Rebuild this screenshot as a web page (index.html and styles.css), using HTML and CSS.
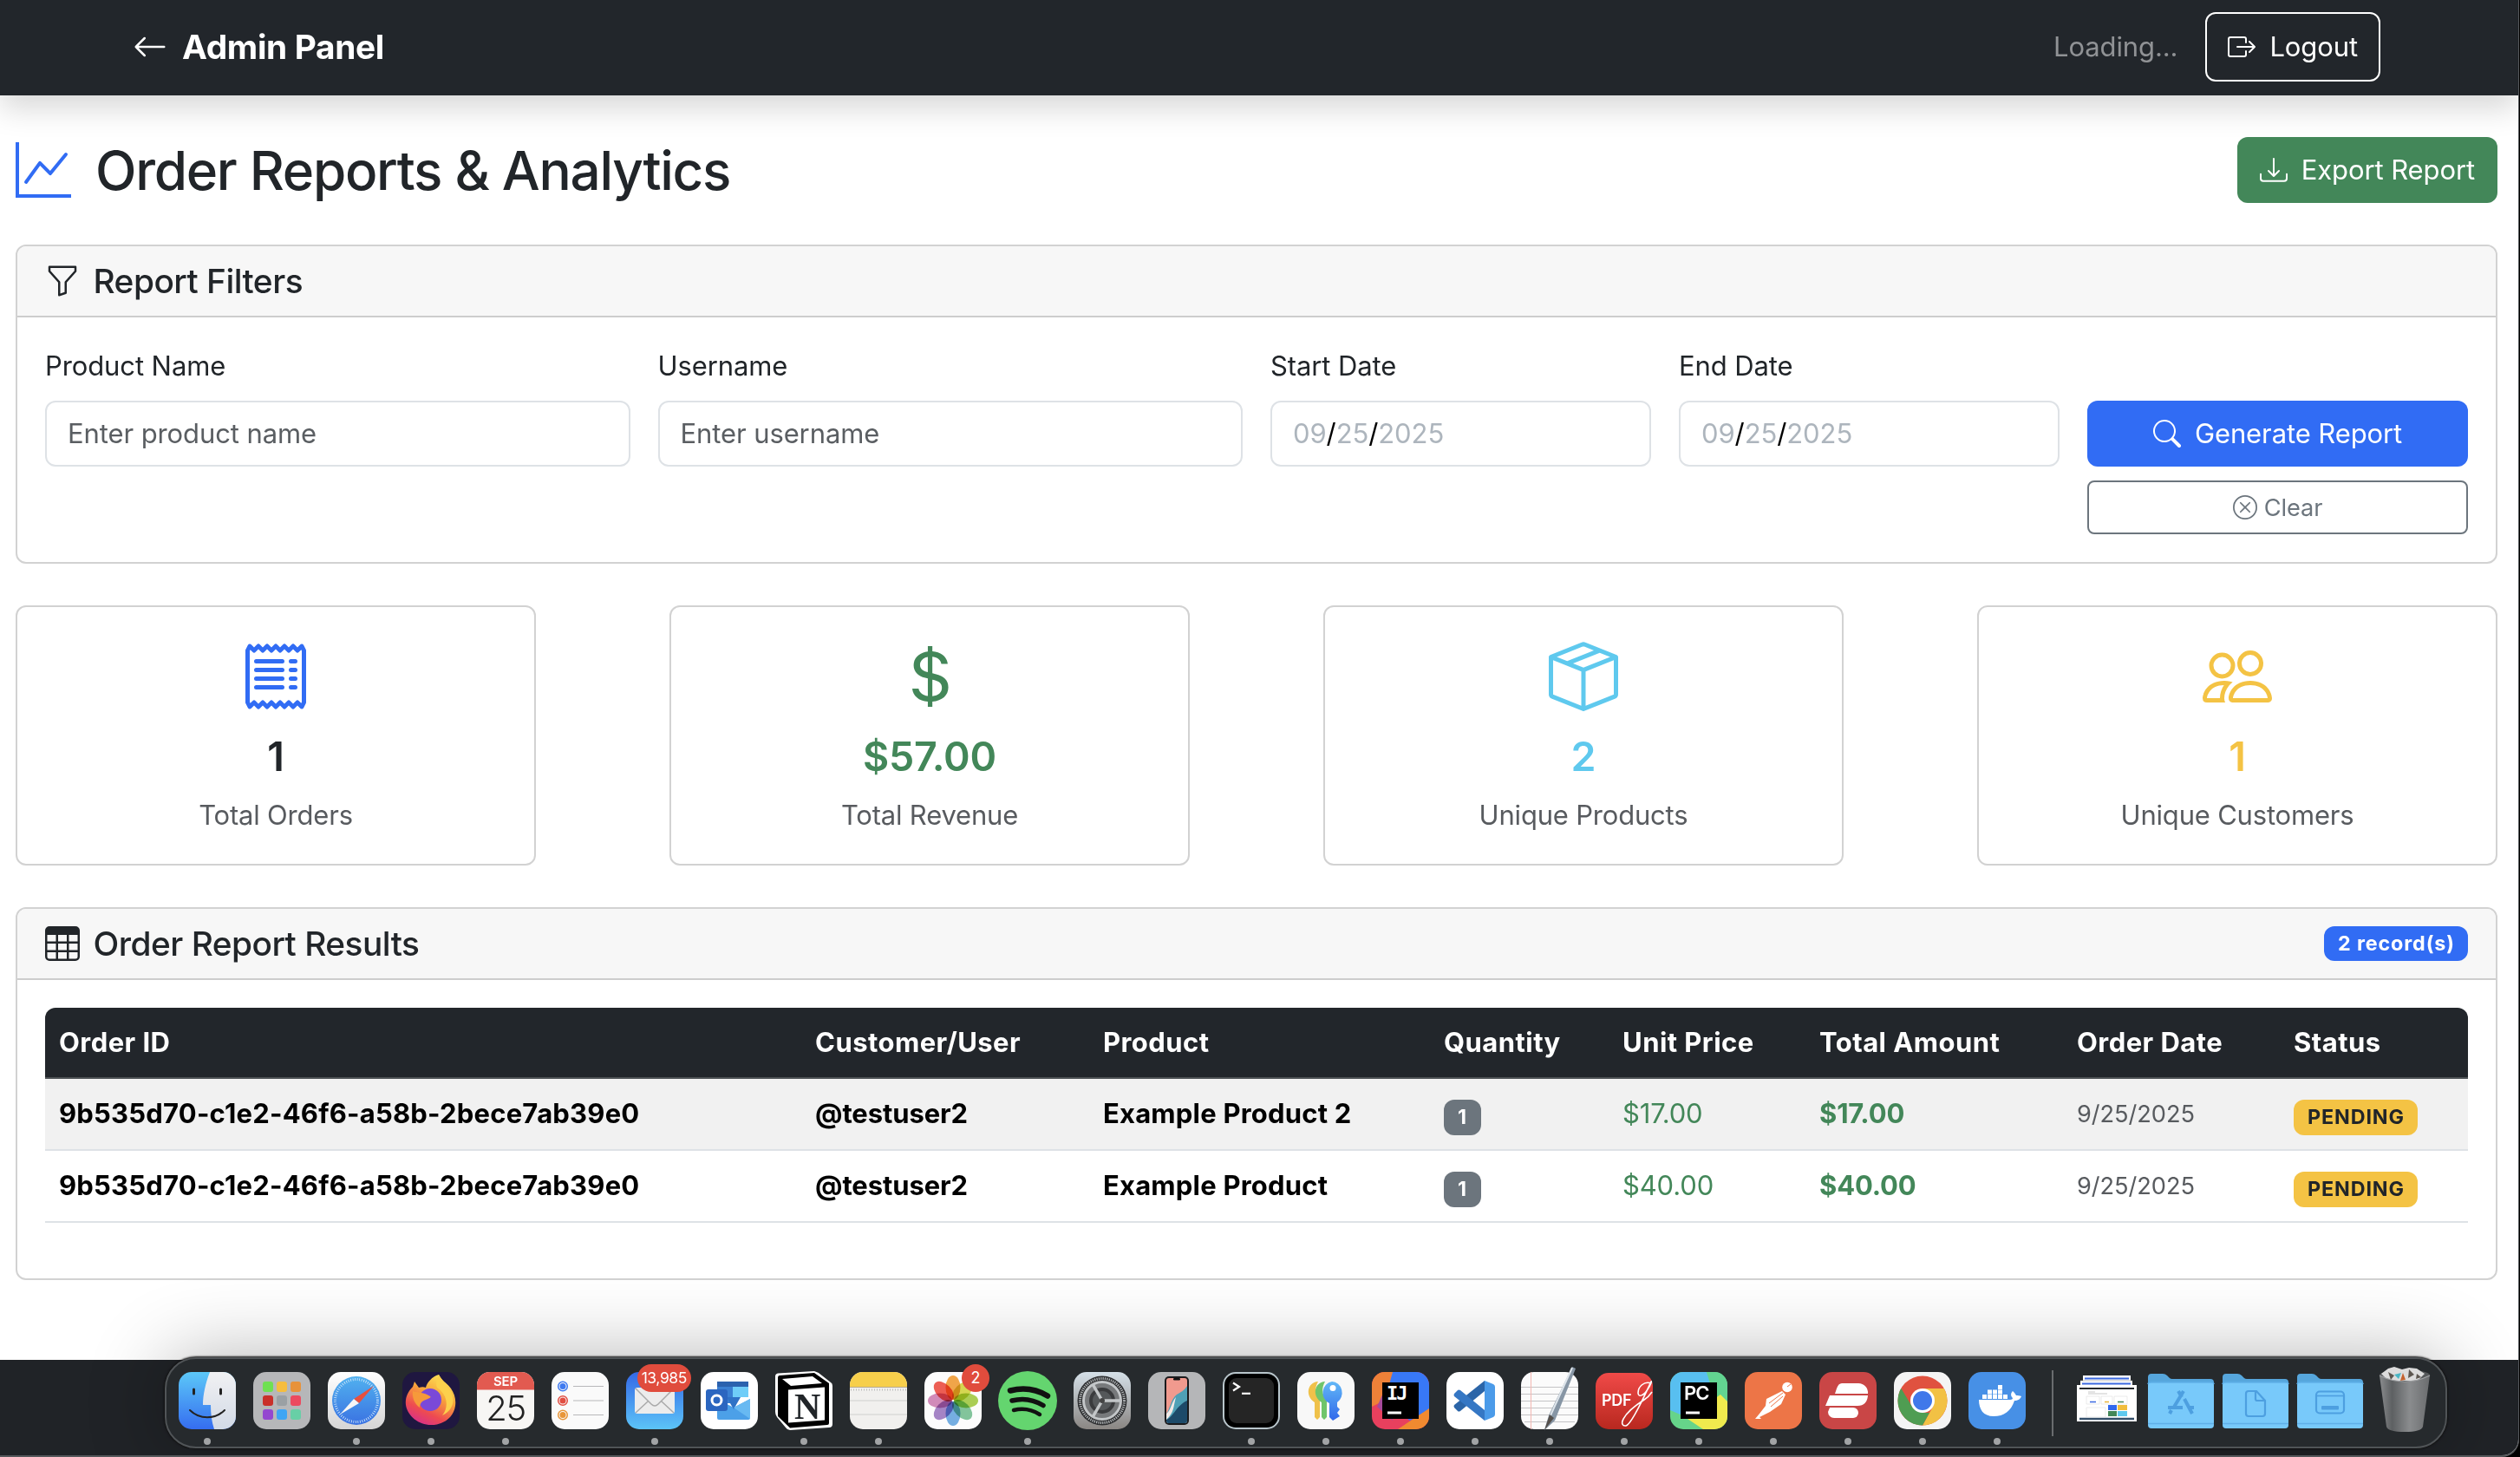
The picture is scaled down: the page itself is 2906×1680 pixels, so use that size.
FILE: index.html
```html
<!DOCTYPE html>
<html lang="en">
<head>
<meta charset="utf-8">
<title>Order Reports &amp; Analytics</title>
<link rel="stylesheet" href="styles.css">
</head>
<body>
<div class="window">
  <nav class="navbar">
    <a class="brand">
      <svg class="i40" viewBox="0 0 16 16"><path d="M15 8a.5.5 0 0 0-.5-.5H2.707l3.147-3.146a.5.5 0 1 0-.708-.708l-4 4a.5.5 0 0 0 0 .708l4 4a.5.5 0 0 0 .708-.708L2.707 8.5H14.5A.5.5 0 0 0 15 8"/></svg>
      <span>Admin Panel</span>
    </a>
    <div class="nav-right">
      <span class="loading">Loading...</span>
      <button class="btn logout">
        <svg class="i32" viewBox="0 0 16 16"><path d="M10 12.5a.5.5 0 0 1-.5.5h-8a.5.5 0 0 1-.5-.5v-9a.5.5 0 0 1 .5-.5h8a.5.5 0 0 1 .5.5v2a.5.5 0 0 0 1 0v-2A1.5 1.5 0 0 0 9.500 2h-8A1.500 1.500 0 0 0 0 3.500v9A1.500 1.500 0 0 0 1.500 14h8a1.500 1.500 0 0 0 1.500-1.500v-2a.5.5 0 0 0-1 0z"/><path d="M15.854 8.354a.5.5 0 0 0 0-.708l-3-3a.5.5 0 0 0-.708.708L14.293 7.500H5.500a.5.5 0 0 0 0 1h8.793l-2.147 2.146a.5.5 0 0 0 .708.708z"/></svg>
        <span>Logout</span>
      </button>
    </div>
  </nav>

  <main class="page">
    <div class="title-row">
      <h1>
        <svg class="i64 primary" viewBox="0 0 16 16"><path d="M0 0h1v15h15v1H0zm14.817 3.113a.5.5 0 0 1 .07.704l-4.5 5.500a.5.5 0 0 1-.74.037L7.060 6.767l-3.656 5.027a.5.5 0 0 1-.808-.588l4-5.500a.5.5 0 0 1 .758-.060l2.609 2.610 4.150-5.073a.5.5 0 0 1 .704-.070"/></svg>
        <span>Order Reports &amp; Analytics</span>
      </h1>
      <button class="btn export">
        <svg class="i32" viewBox="0 0 16 16"><path d="M.5 9.900a.5.5 0 0 1 .5.5v2.500a1 1 0 0 0 1 1h12a1 1 0 0 0 1-1v-2.500a.5.5 0 0 1 1 0v2.500a2 2 0 0 1-2 2H2a2 2 0 0 1-2-2v-2.500a.5.5 0 0 1 .5-.5"/><path d="M7.646 11.854a.5.5 0 0 0 .708 0l3-3a.5.5 0 0 0-.708-.708L8.500 10.293V1.500a.5.5 0 0 0-1 0v8.793L5.354 8.146a.5.5 0 1 0-.708.708z"/></svg>
        <span>Export Report</span>
      </button>
    </div>

    <section class="card">
      <header class="card-header">
        <svg class="i40" viewBox="0 0 16 16"><path d="M1.500 1.500A.5.5 0 0 1 2 1h12a.5.5 0 0 1 .5.5v2a.5.5 0 0 1-.128.334L10 8.692V13.500a.5.5 0 0 1-.342.474l-3 1A.5.5 0 0 1 6 14.500V8.692L1.628 3.834A.5.5 0 0 1 1.500 3.500zm1 .5v1.308l4.372 4.858A.5.5 0 0 1 7 8.500v5.306l2-.666V8.500a.5.5 0 0 1 .128-.334L13.500 3.308V2z"/></svg>
        <h5>Report Filters</h5>
      </header>
      <form class="filters">
        <div class="field w3"><label>Product Name</label><div class="input">Enter product name</div></div>
        <div class="field w3"><label>Username</label><div class="input">Enter username</div></div>
        <div class="field w2"><label>Start Date</label><div class="input date">09<i>/</i>25<i>/</i>2025</div></div>
        <div class="field w2"><label>End Date</label><div class="input date">09<i>/</i>25<i>/</i>2025</div></div>
        <div class="field w2 actions">
          <button type="button" class="btn generate">
            <svg class="i32" viewBox="0 0 16 16"><path d="M11.742 10.344a6.500 6.500 0 1 0-1.397 1.398h-.001q.044.060.098.115l3.850 3.850a1 1 0 0 0 1.415-1.414l-3.850-3.850a1 1 0 0 0-.115-.100zM12 6.500a5.500 5.500 0 1 1-11 0 5.500 5.500 0 0 1 11 0"/></svg>
            <span>Generate Report</span>
          </button>
          <button type="button" class="btn clear">
            <svg class="i28" viewBox="0 0 16 16"><path d="M8 15A7 7 0 1 1 8 1a7 7 0 0 1 0 14m0 1A8 8 0 1 0 8 0a8 8 0 0 0 0 16"/><path d="M4.646 4.646a.5.5 0 0 1 .708 0L8 7.293l2.646-2.647a.5.5 0 0 1 .708.708L8.707 8l2.647 2.646a.5.5 0 0 1-.708.708L8 8.707l-2.646 2.647a.5.5 0 0 1-.708-.708L7.293 8 4.646 5.354a.5.5 0 0 1 0-.708"/></svg>
            <span>Clear</span>
          </button>
        </div>
      </form>
    </section>

    <section class="stats">
      <div class="stat">
        <svg class="i80 primary" viewBox="0 0 16 16"><path d="M1.920.506a.5.5 0 0 1 .434.140L3 1.293l.646-.647a.5.5 0 0 1 .708 0L5 1.293l.646-.647a.5.5 0 0 1 .708 0L7 1.293l.646-.647a.5.5 0 0 1 .708 0L9 1.293l.646-.647a.5.5 0 0 1 .708 0l.646.647.646-.647a.5.5 0 0 1 .708 0l.646.647.646-.647a.5.5 0 0 1 .801.130l.5 1A.5.5 0 0 1 15 2v12a.5.5 0 0 1-.053.224l-.5 1a.5.5 0 0 1-.8.130L13 14.707l-.646.647a.5.5 0 0 1-.708 0L11 14.707l-.646.647a.5.5 0 0 1-.708 0L9 14.707l-.646.647a.5.5 0 0 1-.708 0L7 14.707l-.646.647a.5.5 0 0 1-.708 0L5 14.707l-.646.647a.5.5 0 0 1-.708 0L3 14.707l-.646.647a.5.5 0 0 1-.801-.130l-.5-1A.5.5 0 0 1 1 14V2a.5.5 0 0 1 .053-.224l.5-1a.5.5 0 0 1 .367-.270m.217 1.338L2 2.118v11.764l.137.274.510-.510a.5.5 0 0 1 .707 0l.646.647.646-.646a.5.5 0 0 1 .708 0l.646.646.646-.646a.5.5 0 0 1 .708 0l.646.646.646-.646a.5.5 0 0 1 .708 0l.646.646.646-.646a.5.5 0 0 1 .708 0l.646.646.646-.646a.5.5 0 0 1 .708 0l.509.509.137-.274V2.118l-.137-.274-.510.510a.5.5 0 0 1-.707 0L12 1.707l-.646.647a.5.5 0 0 1-.708 0L10 1.707l-.646.647a.5.5 0 0 1-.708 0L8 1.707l-.646.647a.5.5 0 0 1-.708 0L6 1.707l-.646.647a.5.5 0 0 1-.708 0L4 1.707l-.646.647a.5.5 0 0 1-.708 0z"/><path d="M3.500 4.500h6m-6 2h6m-6 2h6m-6 2h6m2-6h1m-1 2h1m-1 2h1m-1 2h1" fill="none" stroke="currentColor" stroke-linecap="round"/></svg>
        <strong>1</strong><span>Total Orders</span>
      </div>
      <div class="stat">
        <svg class="i80 success" viewBox="0 0 16 16"><path d="M4 10.781c.148 1.667 1.513 2.850 3.591 3.003V15h1.043v-1.216c2.270-.179 3.678-1.438 3.678-3.300 0-1.590-.947-2.510-2.956-3.028l-.722-.187V3.467c1.122.110 1.879.714 2.070 1.616h1.470c-.166-1.600-1.540-2.748-3.540-2.875V1H7.591v1.233c-1.939.230-3.270 1.472-3.270 3.156 0 1.454.966 2.483 2.661 2.917l.610.162v4.031c-1.149-.170-1.940-.800-2.131-1.718zm3.391-3.836c-1.043-.263-1.600-.825-1.600-1.616 0-.944.704-1.641 1.800-1.828v3.495l-.200-.050zm1.591 1.872c1.287.323 1.852.859 1.852 1.769 0 1.097-.826 1.828-2.200 1.939V8.730z"/></svg>
        <strong class="success">$57.00</strong><span>Total Revenue</span>
      </div>
      <div class="stat">
        <svg class="i80 info" viewBox="0 0 16 16"><path d="M8.186 1.113a.5.5 0 0 0-.372 0L1.846 3.500l2.404.961L10.404 2zm3.564 1.426L5.596 5 8 5.961 14.154 3.500zm3.250 1.700-6.500 2.600v7.922l6.500-2.600V4.240zM7.500 14.762V6.838L1 4.239v7.923zM7.443.184a1.500 1.500 0 0 1 1.114 0l7.129 2.852A.5.5 0 0 1 16 3.500v8.662a1 1 0 0 1-.629.928l-7.185 2.874a.5.5 0 0 1-.372 0L.630 13.090a1 1 0 0 1-.630-.928V3.500a.5.5 0 0 1 .314-.464z"/></svg>
        <strong class="info">2</strong><span>Unique Products</span>
      </div>
      <div class="stat">
        <svg class="i80 warning" viewBox="0 0 16 16"><path d="M15 14s1 0 1-1-1-4-5-4-5 3-5 4 1 1 1 1zm-7.978-1L7 12.996c.001-.264.167-1.030.760-1.720C8.312 10.629 9.282 10 11 10c1.717 0 2.687.630 3.240 1.276.593.690.758 1.457.760 1.720l-.008.002-.014.002zM11 7a2 2 0 1 0 0-4 2 2 0 0 0 0 4m3-2a3 3 0 1 1-6 0 3 3 0 0 1 6 0M6.936 9.280a6 6 0 0 0-1.230-.247A7 7 0 0 0 5 9c-4 0-5 3-5 4q0 1 1 1h4.216A2.240 2.240 0 0 1 5 13c0-1.010.377-2.042 1.090-2.904.243-.294.526-.569.846-.816M4.920 10A5.500 5.500 0 0 0 4 13H1c0-.260.164-1.030.760-1.724.545-.636 1.492-1.256 3.160-1.275zM1.500 5.500a3 3 0 1 1 6 0 3 3 0 0 1-6 0m3-2a2 2 0 1 0 0 4 2 2 0 0 0 0-4"/></svg>
        <strong class="warning">1</strong><span>Unique Customers</span>
      </div>
    </section>

    <section class="card">
      <header class="card-header">
        <svg class="i40" viewBox="0 0 16 16"><path d="M0 2a2 2 0 0 1 2-2h12a2 2 0 0 1 2 2v12a2 2 0 0 1-2 2H2a2 2 0 0 1-2-2zm15 2h-4v3h4zm0 4h-4v3h4zm0 4h-4v3h3a1 1 0 0 0 1-1zm-5 3v-3H6v3zm-5 0v-3H1v2a1 1 0 0 0 1 1zm-4-4h4V8H1zm0-4h4V4H1zm5-3v3h4V4zm4 4H6v3h4z"/></svg>
        <h5>Order Report Results</h5>
        <span class="badge blue">2 record(s)</span>
      </header>
      <div class="table-wrap">
        <table>
          <colgroup><col class="c1"><col class="c2"><col class="c3"><col class="c4"><col class="c5"><col class="c6"><col class="c7"><col></colgroup>
          <thead><tr><th>Order ID</th><th>Customer/User</th><th>Product</th><th>Quantity</th><th>Unit Price</th><th>Total Amount</th><th>Order Date</th><th>Status</th></tr></thead>
          <tbody>
            <tr><td>9b535d70-c1e2-46f6-a58b-2bece7ab39e0</td><td class="user">@testuser2</td><td>Example Product 2</td><td><span class="badge gray">1</span></td><td class="price">$17.00</td><td class="price total">$17.00</td><td class="day">9/25/2025</td><td><span class="badge yellow">PENDING</span></td></tr>
            <tr><td>9b535d70-c1e2-46f6-a58b-2bece7ab39e0</td><td class="user">@testuser2</td><td>Example Product</td><td><span class="badge gray">1</span></td><td class="price">$40.00</td><td class="price total">$40.00</td><td class="day">9/25/2025</td><td><span class="badge yellow">PENDING</span></td></tr>
          </tbody>
        </table>
      </div>
    </section>
  </main>
  <footer class="footer"></footer>

  <div class="dock">
    <!-- Finder -->
    <div class="app run"><svg viewBox="0 0 66 66"><defs><linearGradient id="fb" x2="0" y2="1"><stop stop-color="#5cc8f8"/><stop offset="1" stop-color="#356df0"/></linearGradient><linearGradient id="fw" x2="0" y2="1"><stop stop-color="#f1f1f3"/><stop offset="1" stop-color="#d2dae6"/></linearGradient><clipPath id="r"><rect width="66" height="66" rx="15"/></clipPath></defs><g clip-path="url(#r)"><path d="M0 0h66v66H0z" fill="url(#fb)"/><path d="M36 0C31 13 28 26 28 38h9c0 10 1 19 4 28h25V0z" fill="url(#fw)"/></g><path d="M17.500 20v5M48.500 20v5" stroke="#222" stroke-width="3" stroke-linecap="round"/><path d="M13 44c11 11 29 11 40 0" fill="none" stroke="#222" stroke-width="2" stroke-linecap="round"/></svg></div>
    <!-- Launchpad -->
    <div class="app"><svg viewBox="0 0 66 66"><rect width="66" height="66" rx="15" fill="#b6b7b9"/><g><rect x="11" y="11" width="12" height="12" rx="3" fill="#6fe052"/><rect x="27" y="11" width="12" height="12" rx="3" fill="#f5bd3f"/><rect x="43" y="11" width="12" height="12" rx="3" fill="#e8923a"/><rect x="11" y="27" width="12" height="12" rx="3" fill="#c9302a"/><rect x="27" y="27" width="12" height="12" rx="3" fill="#9aa0a4"/><rect x="43" y="27" width="12" height="12" rx="3" fill="#ec4a5f"/><rect x="11" y="43" width="12" height="12" rx="3" fill="#9447d0"/><rect x="27" y="43" width="12" height="12" rx="3" fill="#3fa5f4"/><rect x="43" y="43" width="12" height="12" rx="3" fill="#68cfa6"/></g></svg></div>
    <!-- Safari -->
    <div class="app run"><svg viewBox="0 0 66 66"><defs><linearGradient id="sw" x2="0" y2="1"><stop stop-color="#fff"/><stop offset="1" stop-color="#d5d5d5"/></linearGradient><linearGradient id="sb" x2="0" y2="1"><stop stop-color="#51b1ef"/><stop offset="1" stop-color="#3a72e2"/></linearGradient></defs><rect width="66" height="66" rx="15" fill="url(#sw)"/><circle cx="33" cy="33" r="28" fill="url(#sb)"/><circle cx="33" cy="33" r="24.500" fill="none" stroke="#d7ebfb" stroke-width="3" stroke-dasharray=".8 1.766"/><path d="M53 16L30 31l6 5z" fill="#e8503f"/><path d="M14 49l16-18 6 5z" fill="#f6f6f6"/></svg></div>
    <!-- Firefox -->
    <div class="app run"><svg viewBox="0 0 66 66"><defs><linearGradient id="ff" x1=".8" y1="0" x2=".3" y2="1"><stop stop-color="#fde95a"/><stop offset=".4" stop-color="#f8a63b"/><stop offset=".75" stop-color="#ee4b50"/><stop offset="1" stop-color="#d8308a"/></linearGradient></defs><rect width="66" height="66" rx="15" fill="#1f1740"/><path d="M42 3c3 7 9 9 14 16 4 6 6 12 5 20-2 14-14 22-28 22S6 51 4 38c-1-8 2-15 8-21l2-6 5 7c3-1 6-1 8 0 1-5 7-13 15-15z" fill="url(#ff)"/><circle cx="32" cy="32" r="13" fill="#7a49d8"/><path d="M12 22c6 2 13 1 20 6 2 1-2 3-5 4-4 1-7 4-7 9-6-4-9-12-8-19z" fill="#f69a3a"/><path d="M40 18c12 8 14 22 6 32 14-6 17-22 5-33l-9-14c-2 6-4 10-2 15z" fill="#fcd04c"/></svg></div>
    <!-- Calendar -->
    <div class="app run"><svg viewBox="0 0 66 66"><g clip-path="url(#r)"><path d="M0 0h66v66H0z" fill="#f7f6f4"/><path d="M0 0h66v20.500H0z" fill="#e25a50"/></g><text x="33" y="16" class="cal-m">SEP</text><text x="33" y="56" class="cal-d">25</text></svg></div>
    <!-- Reminders -->
    <div class="app"><svg viewBox="0 0 66 66"><rect width="66" height="66" rx="15" fill="#fafafa"/><path d="M25 16.500h35M25 33h35M25 49.500h35" stroke="#b8b8ba" stroke-width="1.200"/><g stroke-width="1.500" fill="none"><g stroke="#3f7af0"><circle cx="13" cy="16.500" r="5.300"/><circle cx="13" cy="16.500" r="2.800" fill="#3f7af0"/></g><g stroke="#e14e42"><circle cx="13" cy="33" r="5.300"/><circle cx="13" cy="33" r="2.800" fill="#e14e42"/></g><g stroke="#e8963a"><circle cx="13" cy="49.500" r="5.300"/><circle cx="13" cy="49.500" r="2.800" fill="#e8963a"/></g></g></svg></div>
    <!-- Mail -->
    <div class="app run"><svg viewBox="0 0 66 66"><defs><linearGradient id="ml" x2="0" y2="1"><stop stop-color="#3468e6"/><stop offset="1" stop-color="#5cc4f8"/></linearGradient></defs><rect width="66" height="66" rx="15" fill="url(#ml)"/><rect x="10" y="18" width="46" height="30" rx="3" fill="#ececec"/><path d="M11 19l18 18q4 4 8 0l18-18M11 47l14-13M55 47L41 34" fill="none" stroke="#a9a9a9" stroke-width="1.500"/></svg><span class="count wide">13,985</span></div>
    <!-- Outlook -->
    <div class="app"><svg viewBox="0 0 66 66"><rect width="66" height="66" rx="15" fill="#fff"/><path d="M19 11h36v8H19z" fill="#2b62ae"/><path d="M19 17h18v19H19z" fill="#3a7fd2"/><path d="M37 17h18v12H37z" fill="#6fcdf8"/><path d="M19 31l19 10 19-10v22a2 2 0 0 1-2 2H21a2 2 0 0 1-2-2z" fill="#4ca0e8"/><path d="M30 29h16L38 43z" fill="#2f72c6"/><path d="M38 41l19 13V31z" fill="#68b9f2"/><rect x="6" y="20" width="25" height="25" rx="3" fill="#2b66c0"/><circle cx="18.500" cy="32.500" r="5.500" fill="none" stroke="#fff" stroke-width="3"/></svg></div>
    <!-- Notion -->
    <div class="app run"><svg viewBox="0 0 66 66"><path d="M3 1.500L45-1l5 2 14 11q2 1 2 4v44q0 4-4 4L17 67q-3 0-5-3L2 52q-2-3-2-6V5q0-3 3-3.500z" fill="#fff"/><path d="M5 4l40-3 17 12v46q0 2-2 2l-43 3.500L3 51V7q0-3 2-3z" fill="#000"/><path d="M8 8l35-3 11 8-36 3z" fill="#fff"/><path d="M15 20.500l42-3v38l-42 3z" fill="#fff"/><text x="37" y="54" class="notion">N</text></svg></div>
    <!-- Notes -->
    <div class="app run"><svg viewBox="0 0 66 66"><g clip-path="url(#r)"><path d="M0 0h66v66H0z" fill="#f1f0ee"/><path d="M0 0h66v17H0z" fill="#f7cf4b"/></g><path d="M0 17.500h66" stroke="#b7a98a"/><path d="M1 20.500h64" stroke="#bbb" stroke-width="2" stroke-dasharray="1 2"/><path d="M0 33h66M0 49h66" stroke="#cfcfcd" stroke-width="1.200"/></svg></div>
    <!-- Photos -->
    <div class="app"><svg viewBox="0 0 66 66"><rect width="66" height="66" rx="15" fill="#fcfcfc"/><g class="petals"><ellipse cx="33" cy="18" rx="8.500" ry="14" fill="#f2a03a"/><ellipse cx="33" cy="18" rx="8.500" ry="14" fill="#d5d643" transform="rotate(45 33 33)"/><ellipse cx="33" cy="18" rx="8.500" ry="14" fill="#a5cc46" transform="rotate(90 33 33)"/><ellipse cx="33" cy="18" rx="8.500" ry="14" fill="#79c295" transform="rotate(135 33 33)"/><ellipse cx="33" cy="18" rx="8.500" ry="14" fill="#6aa9e2" transform="rotate(180 33 33)"/><ellipse cx="33" cy="18" rx="8.500" ry="14" fill="#a07cc4" transform="rotate(225 33 33)"/><ellipse cx="33" cy="18" rx="8.500" ry="14" fill="#d183b5" transform="rotate(270 33 33)"/><ellipse cx="33" cy="18" rx="8.500" ry="14" fill="#ee5146" transform="rotate(315 33 33)"/></g></svg><span class="count">2</span></div>
    <!-- Spotify -->
    <div class="app run"><svg viewBox="0 0 66 66"><circle cx="33" cy="33" r="34" fill="#64d56f"/><g fill="none" stroke="#111" stroke-linecap="round"><path d="M13 21.500q23-6 43 6" stroke-width="6.500"/><path d="M15 33q19-5 36 5.500" stroke-width="5.500"/><path d="M17 44q16-4 30 5" stroke-width="4.500"/></g></svg></div>
    <!-- System Settings -->
    <div class="app"><svg viewBox="0 0 66 66"><defs><linearGradient id="ss" x2="0" y2="1"><stop stop-color="#d5e0e8"/><stop offset="1" stop-color="#8a8683"/></linearGradient></defs><rect width="66" height="66" rx="15" fill="url(#ss)"/><circle cx="33" cy="33" r="28.500" fill="#2e2f31"/><circle cx="33" cy="33" r="25.500" fill="none" stroke="#b4b8ba" stroke-width="3" stroke-dasharray="1.200 1.200"/><circle cx="33" cy="33" r="21.500" fill="#77797b" stroke="#c3c6c8" stroke-width="3"/><circle cx="33" cy="33" r="13" fill="#55585a" stroke="#3a3b3d" stroke-width="4"/><path d="M33 33h21M33 33L22.500 14.800M33 33L22.500 51.200" stroke="#c3c6c8" stroke-width="3.500"/><circle cx="33" cy="33" r="3" fill="#444"/></svg></div>
    <!-- iPhone Mirroring -->
    <div class="app"><svg viewBox="0 0 66 66"><rect width="66" height="66" rx="15" fill="#b5b6b8"/><rect x="19" y="5" width="28" height="56" rx="5" fill="#1b1b1d"/><rect x="21" y="7" width="24" height="52" rx="3" fill="#f19a8e"/><path d="M21 48c4-4 5-17 12-22 5-3 8-4 12-10v40a3 3 0 0 1-3 3H24a3 3 0 0 1-3-3z" fill="#4fa0b6"/><path d="M21 55c8-3 12-17 24-22v23a3 3 0 0 1-3 3H24a3 3 0 0 1-3-3z" fill="#1d4a69"/><path d="M21 48c5-3 6-14 11-19-3 11-2 18-11 26z" fill="#f3e9e6"/><rect x="29" y="7" width="8" height="2.500" rx="1.200" fill="#111"/></svg></div>
    <!-- Terminal -->
    <div class="app run"><svg viewBox="0 0 66 66"><rect width="66" height="66" rx="15" fill="#b9c6cc"/><rect x="2" y="2" width="62" height="62" rx="13" fill="#000"/><rect x="7" y="7" width="52" height="52" rx="9" fill="#252525"/><path d="M12 12.500l7 4.500-7 4.500" fill="none" stroke="#fff" stroke-width="2.200"/><path d="M22 24.800h10" stroke="#fff" stroke-width="2.200"/></svg></div>
    <!-- Passwords -->
    <div class="app run"><svg viewBox="0 0 66 66"><defs><linearGradient id="pk" x2="0" y2="1"><stop stop-color="#62b8f7"/><stop offset="1" stop-color="#3168ea"/></linearGradient></defs><rect width="66" height="66" rx="15" fill="#f8f8f8"/><path d="M24 11C11 12 9 28 20 35v17l3 3 3-3V33c-6-7-6-15-2-22z" fill="#efc14a"/><path d="M32 11C19 12 17 28 28 35v17l3 3 3-3V33c-6-7-6-15-2-22z" fill="#6fc56b"/><path d="M40 11a12 13 0 0 1 6 24v5l3 3-3 4 3 4-8 5-4-4V36a12 13 0 0 1 3-25z" fill="url(#pk)"/><circle cx="41" cy="18.500" r="3.500" fill="#fff"/></svg></div>
    <!-- IntelliJ IDEA -->
    <div class="app run"><svg viewBox="0 0 66 66"><g clip-path="url(#r)"><path d="M0 0h66v66H0z" fill="#e8405e"/><path d="M0 0h26L16 32 0 40z" fill="#ee8138"/><path d="M24 0h42v44L44 56 14 36z" fill="#3878f6"/><path d="M14 22h10v34L6 40z" fill="#a64a9c"/><path d="M66 42v24H30z" fill="#f08a30"/></g><rect x="12" y="12" width="42" height="42" fill="#000"/><text x="17" y="32" class="jb">IJ</text><path d="M18 47h16" stroke="#fff" stroke-width="3"/></svg></div>
    <!-- VS Code -->
    <div class="app run"><svg viewBox="0 0 66 66"><rect width="66" height="66" rx="15" fill="#fff"/><path d="M44 10v12L16 45q-2 1-3 0l-4-4q-1-2 0-3z" fill="#2b65a8"/><path d="M44 56V44L16 21q-2-1-3 0l-4 4q-1 2 0 3z" fill="#3577c4"/><path d="M44 10l10 4q2 1 2 3v32q0 2-2 3l-10 4z" fill="#4b9be9"/></svg></div>
    <!-- TextEdit -->
    <div class="app run"><svg viewBox="0 0 66 66"><rect width="66" height="66" rx="15" fill="#fbfbfb"/><path d="M0 17.500h66M0 25.500h66M0 33.500h66M0 41.500h66M0 49.500h66M4 57.500h58" stroke="#c4c4c6"/><path d="M11.500 0v66" stroke="#f3b7b2"/><path d="M59-6l4 2-24 60-12 11 5-17z" fill="#8796a5"/><path d="M59-5L34 50" stroke="#dfe6ec" stroke-width="2"/><path d="M33 49l5 4-11 14z" fill="#55504c"/></svg></div>
    <!-- PDFgear -->
    <div class="app run"><svg viewBox="0 0 66 66"><defs><linearGradient id="pd" x2="0" y2="1"><stop stop-color="#f04a48"/><stop offset="1" stop-color="#b8281f"/></linearGradient></defs><rect y="1" width="66" height="65" rx="15" fill="url(#pd)"/><text x="7" y="38.500" class="pdf">PDF</text><path d="M64 13c-8-3-15 4-15 11 0 6 7 3 11-4 4-6 5-10 4-9C58 24 42 60 35 62c-8 1-7-12 21-30 5-3 7-6 9-9" fill="none" stroke="#fff" stroke-width="1.600"/></svg></div>
    <!-- PyCharm -->
    <div class="app run"><svg viewBox="0 0 66 66"><g clip-path="url(#r)"><path d="M0 0h66v66H0z" fill="#66d48a"/><path d="M0 0h42l6 20L14 50 0 44z" fill="#58bff0"/><path d="M66 20v46H38L20 54z" fill="#f0ea4e"/><path d="M42 0h24v34l-14-14z" fill="#62d491"/></g><rect x="12" y="12" width="42" height="42" fill="#000"/><text x="16" y="32" class="jb sans">PC</text><path d="M18 47h16" stroke="#fff" stroke-width="3"/></svg></div>
    <!-- Postman -->
    <div class="app run"><svg viewBox="0 0 66 66"><rect width="66" height="66" rx="15" fill="#ed7547"/><circle cx="49" cy="17.500" r="5.800" fill="#fff"/><path d="M43 22l4 4-5 11-13 9-12 6 2 2h-7l5-6 7-9 1-8z" fill="#fff"/><path d="M44 24L28 36m16-8L30 40M49 17l4-3" stroke="#ed7547" stroke-width="1"/></svg></div>
    <!-- ExpressVPN -->
    <div class="app run"><svg viewBox="0 0 66 66"><rect width="66" height="66" rx="15" fill="#c94646"/><g fill="#fff"><path d="M26 13h19a11 11 0 0 1 11 12H18l2-6q2-6 6-6z"/><path d="M12 27h44q-1 12-12 12H7z"/><path d="M12 41h27a5.500 5.500 0 0 1 0 12H17a7 7 0 0 1-7-7z"/></g></svg></div>
    <!-- Chrome -->
    <div class="app run"><svg viewBox="0 0 66 66"><rect width="66" height="66" rx="15" fill="#f4f4f4"/><circle cx="33" cy="33" r="28.500" fill="#e0523f"/><path d="M33 19h24.800A28.500 28.500 0 0 1 33 61.500L45 40z" fill="#f2c144"/><path d="M8.300 18.800L21 40l12 7 8 0-8 14.500A28.500 28.500 0 0 1 8.300 18.800z" fill="#4f9d52"/><circle cx="33" cy="33" r="14" fill="#fff"/><circle cx="33" cy="33" r="11" fill="#4078ea"/></svg></div>
    <!-- Docker -->
    <div class="app run"><svg viewBox="0 0 66 66"><rect width="66" height="66" rx="15" fill="#4790e6"/><path d="M12 32h36c2 0 3-1 3-2-3-3-2-6 0-8 2 2 3 3 4 5 2 0 4 0 6 1-1 3-4 5-8 5-4 12-12 18-24 18C17 51 12 43 12 32z" fill="#fff"/><path d="M16 26h5v5h-5zm6 0h5v5h-5zm6 0h5v5h-5zm6 0h5v5h-5zm6 0h5v5h-5zm-18-5.500h5v5h-5zm6 0h5v5h-5zm6 0h5v5h-5zm0-5.500h5v5h-5z" fill="#fff"/></svg></div>
    <div class="sep"></div>
    <!-- Screenshots stack -->
    <div class="app"><svg viewBox="0 0 66 66"><path d="M6 4h55v12H6zM3 10h60v10H3z" fill="#fff"/><path d="M8 7.500h51M5 13.500h56" stroke="#3b68e0" stroke-width="2"/><path d="M3 10h60" stroke="#999" stroke-width=".6"/><path d="M-1 15h69v42H-1z" fill="#fff"/><path d="M2 19h63" stroke="#24282c" stroke-width="2"/><path d="M2 54h63" stroke="#35506b" stroke-width="2.500"/><path d="M12 23h8M12 25h22" stroke="#bbb" stroke-width=".8"/><g fill="none" stroke="#ddd" stroke-width=".6"><path d="M10 28h15v9H10zM27 28h13v9H27zM42 28h15v9H42zM10 41h22v11H10z"/></g><path d="M14 34.500h7" stroke="#3b68e0" stroke-width="1.500"/><path d="M31 34.500h5" stroke="#e9b53b" stroke-width="1.500"/><path d="M46 34.500h7" stroke="#438759" stroke-width="1.500"/><path d="M35 38h10v6H35z" fill="#3168ee"/><path d="M46 38h11v6H46z" fill="#f1bd3d"/><path d="M35 45h10v6H35z" fill="#438759"/><path d="M46 45h11v6H46z" fill="#5fc9ee"/></svg></div>
    <!-- Folders -->
    <div class="app"><svg viewBox="0 0 66 66"><path d="M-5 6q0-4 4-4h13q3 0 5 2l3 3q1 1 3 1h44q4 0 4 4v12H-5z" fill="#56a6dc"/><rect x="-5" y="12" width="76" height="53" rx="4" fill="#78c9fa"/><path d="M-5 59.500h76M-5 14q0-2 4-2h68q4 0 4 2" fill="none" stroke="#5fb0e8" stroke-width="1.500"/><g fill="none" stroke="#4d9fe0" stroke-width="4"><path d="M36 22L24 42M30 22l4 7M37 31l9 17M18 41h17m6 0h7M22 44l-2 4"/></g></svg></div>
    <div class="app"><svg viewBox="0 0 66 66"><path d="M-5 6q0-4 4-4h13q3 0 5 2l3 3q1 1 3 1h44q4 0 4 4v12H-5z" fill="#56a6dc"/><rect x="-5" y="12" width="76" height="53" rx="4" fill="#78c9fa"/><path d="M-5 59.500h76M-5 14q0-2 4-2h68q4 0 4 2" fill="none" stroke="#5fb0e8" stroke-width="1.500"/><path d="M25 22h9l10 11v15q0 3-3 3H25q-3 0-3-3V25q0-3 3-3zM33 22v9q0 2 2 2h9" fill="none" stroke="#4d9fe0" stroke-width="2.200"/></svg></div>
    <div class="app"><svg viewBox="0 0 66 66"><path d="M-5 6q0-4 4-4h13q3 0 5 2l3 3q1 1 3 1h44q4 0 4 4v12H-5z" fill="#56a6dc"/><rect x="-5" y="12" width="76" height="53" rx="4" fill="#78c9fa"/><path d="M-5 59.500h76M-5 14q0-2 4-2h68q4 0 4 2" fill="none" stroke="#5fb0e8" stroke-width="1.500"/><rect x="17" y="22.500" width="32" height="25" rx="4" fill="none" stroke="#4d9fe0" stroke-width="2.200"/><path d="M17 27.500h32" stroke="#4d9fe0" stroke-width="1.600"/><rect x="23" y="39" width="20" height="4.500" rx="1" fill="#4d9fe0"/></svg></div>
    <!-- Trash -->
    <div class="app"><svg viewBox="0 0 66 66"><defs><linearGradient id="tr"><stop stop-color="#8b8d8f"/><stop offset=".25" stop-color="#5d6062"/><stop offset=".6" stop-color="#8a8c8e"/><stop offset="1" stop-color="#6a6c6e"/></linearGradient></defs><ellipse cx="33" cy="3.500" rx="29" ry="6" fill="#55585a"/><path d="M6 2l8-6 7-2 9 3 8-2 9 1 9 6-8 8H14z" fill="#dcdcdc"/><path d="M14 0l7 4-4 5zM38-3l6 6-7 4zM47 2l5 4-6 2z" fill="#5c5650"/><path d="M21 3l8-2-3 7z" fill="#49b6c4"/><path d="M31 1l3 8-6 1z" fill="#c4622e"/><path d="M4 4q29 14 58 0l-8 59q-2 6-21 6t-21-6z" fill="url(#tr)"/><path d="M4 4q29 14 58 0" fill="none" stroke="#a2a4a6" stroke-width="1.200"/></svg></div>
  </div>
</div>
</body>
</html>
```
FILE: styles.css
```css
* { box-sizing: border-box; }
body {
  margin: 0;
  width: 2906px;
  height: 1680px;
  overflow: hidden;
  background: #000;
  font-family: Inter, "Liberation Sans", sans-serif;
  font-size: 31px;
  line-height: 48px;
  letter-spacing: -0.1px;
  color: #212529;
}
h1, h5 { margin: 0; font-weight: 500; }
svg { display: block; flex: none; fill: currentColor; overflow: visible; }
.i28 { width: 28px; height: 28px; }
.i32 { width: 32px; height: 32px; }
.i40 { width: 40px; height: 40px; }
.i64 { width: 64px; height: 64px; }
.i80 { width: 80px; height: 80px; }
.primary { color: #316cf4; }
.success { color: #438759; }
.info { color: #5fc9ee; }
.warning { color: #f4c344; }

.window {
  position: relative;
  width: 2905px;
  height: 1680px;
  display: flex;
  flex-direction: column;
  background: #fff;
  border-right: 1px solid #55585b;
  border-bottom: 2px solid #55585b;
  border-bottom-right-radius: 20px;
  overflow: hidden;
}

/* top bar */
.navbar {
  flex: none;
  height: 110px;
  padding: 0 159px 2px 153px;
  display: flex;
  align-items: center;
  justify-content: space-between;
  background: #22262b;
  color: #fff;
  box-shadow: 0 16px 32px rgba(0, 0, 0, .15);
}
.brand {
  display: flex;
  align-items: center;
  gap: 17px;
  font-size: 38.8px;
  font-weight: 700;
  letter-spacing: -0.35px;
}
.brand svg { margin-top: -1px; }
.nav-right { display: flex; align-items: center; gap: 32px; }
.loading { color: #909295; }
.btn {
  display: flex;
  align-items: center;
  justify-content: center;
  height: 76px;
  padding: 0 24px;
  gap: 16px;
  border: 2px solid transparent;
  border-radius: 12px;
  background: none;
  color: #fff;
  font: inherit;
  letter-spacing: inherit;
}
.logout { height: 80px; border-color: #fff; }

/* content */
.page { flex: 1; padding: 48px 24px 0 18px; }
.title-row { display: flex; justify-content: space-between; margin-bottom: 48px; }
h1 {
  display: flex;
  align-items: center;
  gap: 28px;
  height: 76px;
  font-size: 62px;
  letter-spacing: -1.3px;
}
h1 span { padding-top: 2px; }
.export { background: #438759; }

.card {
  margin-bottom: 48px;
  border: 2px solid #d2d2d2;
  border-radius: 12px;
  background: #fff;
  overflow: hidden;
}
.card-header {
  display: flex;
  align-items: center;
  gap: 15.5px;
  height: 82px;
  padding: 0 32px;
  background: #f7f7f7;
  border-bottom: 2px solid #cdcdcd;
}
h5 { font-size: 38.8px; letter-spacing: -0.5px; }

.filters {
  display: grid;
  grid-template-columns: 674.5fr 674.5fr 439fr 439fr 439fr;
  gap: 32px;
  padding: 32px;
}
.field label { display: block; margin-bottom: 16px; }
.input {
  height: 76px;
  padding: 12px 24px;
  border: 2px solid #dee2e6;
  border-radius: 12px;
  color: #5a5e62;
}
.date { color: #adb5bd; }
.date i { font-style: normal; color: #000; }
.actions { padding-top: 64px; }
.generate { width: 100%; background: #316cf4; }
.clear {
  width: 100%;
  height: 62px;
  margin-top: 16px;
  gap: 8px;
  border-color: #6c757d;
  border-radius: 8px;
  color: #6c757d;
  font-size: 27.2px;
}
.clear span { padding-top: 2px; }

.stats { display: grid; grid-template-columns: repeat(4, 1fr); gap: 154px; margin-bottom: 48px; }
.stat {
  display: flex;
  flex-direction: column;
  align-items: center;
  height: 300px;
  padding-top: 40px;
  border: 2px solid #d2d2d2;
  border-radius: 12px;
}
.stat strong {
  margin: 24px 0 15px;
  font-size: 46.5px;
  line-height: 57px;
  font-weight: 600;
  letter-spacing: -.2px;
}
.stat span { color: #585b5f; letter-spacing: -.2px; }

.badge {
  display: inline-block;
  height: 40px;
  padding: 0 15px 0 16px;
  border-radius: 12px;
  color: #fff;
  font-size: 23.3px;
  font-weight: 700;
  line-height: 39px;
  letter-spacing: .9px;
}
.blue { margin-left: auto; background: #316cf4; }
.gray { padding-right: 16px; background: #6c757d; }
.yellow { background: #f4c344; color: #212529; }

.table-wrap { padding: 32px 32px 64px; }
table {
  width: 100%;
  table-layout: fixed;
  border-collapse: separate;
  border-spacing: 0;
  border-radius: 12px 12px 0 0;
  overflow: hidden;
}
.c1 { width: 872px; }
.c2 { width: 332px; }
.c3 { width: 393px; }
.c4 { width: 206px; }
.c5 { width: 227px; }
.c6 { width: 297px; }
.c7 { width: 250px; }
th, td { padding: 0 16px; text-align: left; white-space: nowrap; font-weight: 700; vertical-align: middle; }
th {
  height: 82px;
  background: #22262b;
  border-bottom: 2px solid #4d5154;
  color: #fff;
  letter-spacing: .45px;
}
td {
  height: 83px;
  padding-bottom: 1px;
  border-bottom: 2px solid #dee2e6;
  color: #000;
  letter-spacing: .2px;
}
td.user { letter-spacing: -.1px; }
tbody tr:first-child td { background: #f1f1f1; }
td .badge { margin-top: 5px; height: 41px; vertical-align: middle; }
td.price { color: #438759; font-weight: 400; letter-spacing: -.15px; }
td.total { font-weight: 700; }
td.day { padding-top: 1px; padding-bottom: 0; font-weight: 400; font-size: 27.2px; letter-spacing: -.05px; color: #585b5f; }

.footer { flex: none; height: 110px; background: #202327; }

/* dock */
.dock {
  position: absolute;
  left: 190px;
  top: 1565px;
  width: 2632px;
  height: 105px;
  padding: 15px 14px 0;
  display: flex;
  gap: 20px;
  border: 2px solid #505457;
  border-radius: 36px;
  background: #262a2d;
  box-shadow: 0 0 2px 1px #111, 0 0 90px rgba(0, 0, 0, .3);
}
.app { position: relative; width: 66px; height: 66px; flex: none; }
.app svg { width: 66px; height: 66px; }
.run::after {
  content: "";
  position: absolute;
  left: 29px;
  bottom: -18px;
  width: 8px;
  height: 8px;
  border-radius: 50%;
  background: #a2a4a6;
}
.sep { width: 2px; height: 76px; margin: -2px 8px 0 10px; background: #696c6e; }
.count {
  position: absolute;
  top: -9px;
  right: -9px;
  height: 32px;
  min-width: 32px;
  padding: 0 5px;
  border-radius: 16px;
  background: #e04c3d;
  color: #fff;
  font-size: 18px;
  line-height: 32px;
  text-align: center;
}
.wide { font-size: 17.5px; letter-spacing: -.4px; }
.petals { mix-blend-mode: multiply; }
.petals ellipse { mix-blend-mode: multiply; opacity: .92; }
.cal-m { font-size: 15px; font-weight: 600; fill: #fff; text-anchor: middle; }
.cal-d { font-size: 40px; font-weight: 300; fill: #222; text-anchor: middle; letter-spacing: -1.5px; }
.notion { font: 700 42px "Liberation Serif", serif; text-anchor: middle; }
.jb { font: 700 22px "DejaVu Sans Mono", monospace; fill: #fff; letter-spacing: -2px; }
.sans { font: 600 22px Inter, sans-serif; letter-spacing: -1px; }
.pdf { font-size: 18px; font-weight: 600; fill: #fff; letter-spacing: -.3px; }
```
